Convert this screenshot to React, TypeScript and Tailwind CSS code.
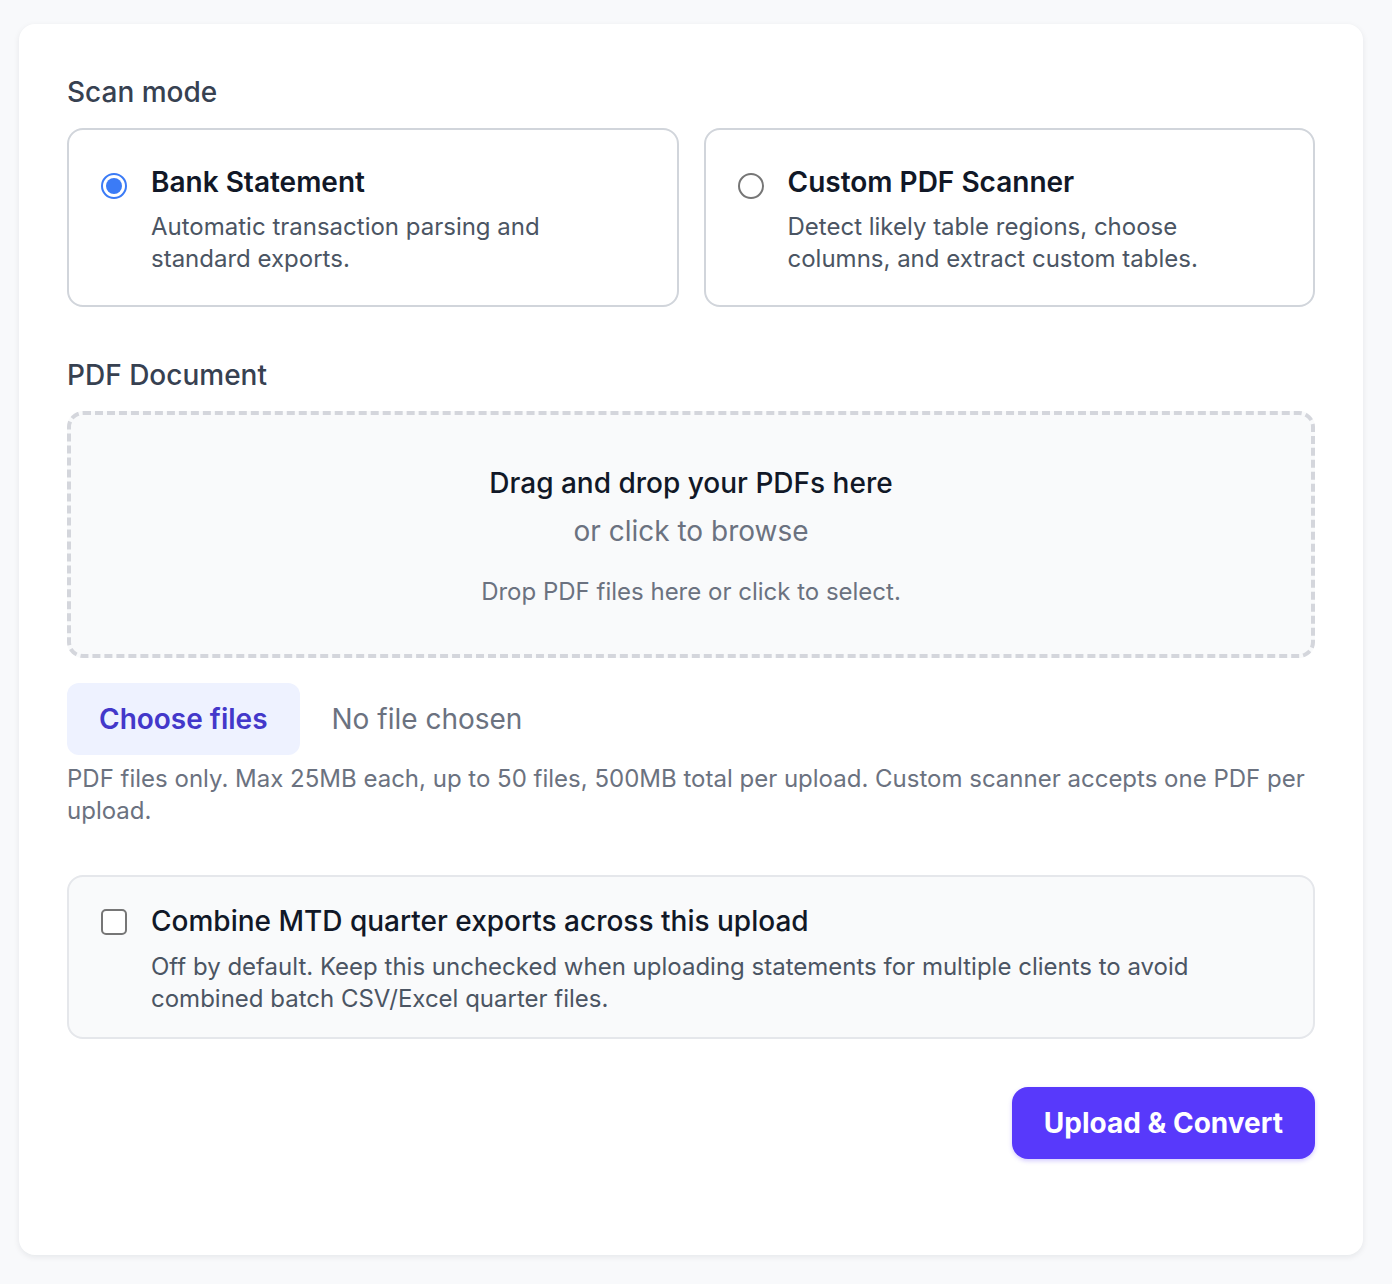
import React, { useState } from "react";

const MODES = [
  {
    id: "bank",
    title: "Bank Statement",
    desc: "Automatic transaction parsing and standard exports.",
  },
  {
    id: "custom",
    title: "Custom PDF Scanner",
    desc: "Detect likely table regions, choose columns, and extract custom tables.",
  },
];

function Radio({ checked }: { checked: boolean }) {
  return checked ? (
    <span className="mt-[11px] flex h-[26px] w-[26px] shrink-0 items-center justify-center rounded-full border-2 border-[#3b7bf6] bg-white">
      <span className="h-[16px] w-[16px] rounded-full bg-[#3b7bf6]" />
    </span>
  ) : (
    <span className="mt-[11px] h-[26px] w-[26px] shrink-0 rounded-full border-2 border-[#767676] bg-white" />
  );
}

export default function App() {
  const [mode, setMode] = useState("bank");
  const [combine, setCombine] = useState(false);

  return (
    <div
      className="min-h-screen bg-[#f8f9fb] pt-6 pb-7"
      style={{ fontFamily: "Inter, 'Noto Sans', sans-serif" }}
    >
      <div className="ml-[19px] w-[1344px] rounded-2xl bg-white px-12 pt-12 pb-24 shadow-[0_2px_6px_rgba(15,23,42,0.08)]">
        <div className="text-[28px] font-medium leading-[40px] text-[#374151]">Scan mode</div>
        <div className="mt-4 grid grid-cols-2 gap-[25px]">
          {MODES.map((m) => (
            <button
              key={m.id}
              onClick={() => setMode(m.id)}
              className="flex items-start gap-6 rounded-2xl border-2 border-[#d1d5db] bg-white px-8 pt-8 pb-[30px] text-left"
            >
              <Radio checked={mode === m.id} />
              <div>
                <div className="text-[28px] font-semibold leading-[40px] text-[#111827]">{m.title}</div>
                <div className="mt-[9px] pr-16 text-[24px] leading-[32px] text-[#4b5563]">{m.desc}</div>
              </div>
            </button>
          ))}
        </div>

        <div className="mt-12 text-[28px] font-medium leading-[40px] text-[#374151]">PDF Document</div>
        <div className="mt-4 rounded-2xl border-4 border-dashed border-[#d4d6dc] bg-[#f9fafb] px-8 pt-12 pb-[46px] text-center">
          <div className="text-[28px] font-medium leading-[40px] text-[#111827]">Drag and drop your PDFs here</div>
          <div className="mt-2 text-[28px] leading-[40px] text-[#6b7280]">or click to browse</div>
          <div className="mt-[25px] text-[24px] leading-[32px] text-[#6b7280]">Drop PDF files here or click to select.</div>
        </div>

        <div className="mt-[25px] flex items-center gap-8">
          <button className="rounded-xl bg-[#eef2ff] px-8 py-4 text-[28px] font-semibold leading-[40px] text-[#4338ca]">
            Choose files
          </button>
          <span className="text-[28px] leading-[40px] text-[#6b7280]">No file chosen</span>
        </div>
        <p className="mt-2 text-[24px] leading-[32px] text-[#6b7280]">
          PDF files only. Max 25MB each, up to 50 files, 500MB total per upload. Custom scanner accepts one PDF per upload.
        </p>

        <label className="mt-12 flex cursor-pointer items-start gap-6 rounded-2xl border-2 border-[#e5e7eb] bg-[#f9fafb] px-8 pt-6 pb-[22px]">
          <input
            type="checkbox"
            checked={combine}
            onChange={(e) => setCombine(e.target.checked)}
            className="sr-only"
          />
          <span className="mt-[8px] h-[26px] w-[26px] shrink-0 rounded-[5px] border-2 border-[#767676] bg-white" />
          <div>
            <div className="text-[28px] font-medium leading-[40px] text-[#111827]">
              Combine MTD quarter exports across this upload
            </div>
            <div className="mt-[10px] text-[24px] leading-[32px] text-[#4b5563]">
              Off by default. Keep this unchecked when uploading statements for multiple clients to avoid combined batch CSV/Excel quarter files.
            </div>
          </div>
        </label>

        <div className="mt-12 flex justify-end">
          <button className="rounded-2xl bg-[#5839fb] px-8 py-4 text-[28px] font-bold leading-[40px] text-white shadow-[0_2px_4px_rgba(88,57,251,0.25)]">
            Upload &amp; Convert
          </button>
        </div>
      </div>
    </div>
  );
}
